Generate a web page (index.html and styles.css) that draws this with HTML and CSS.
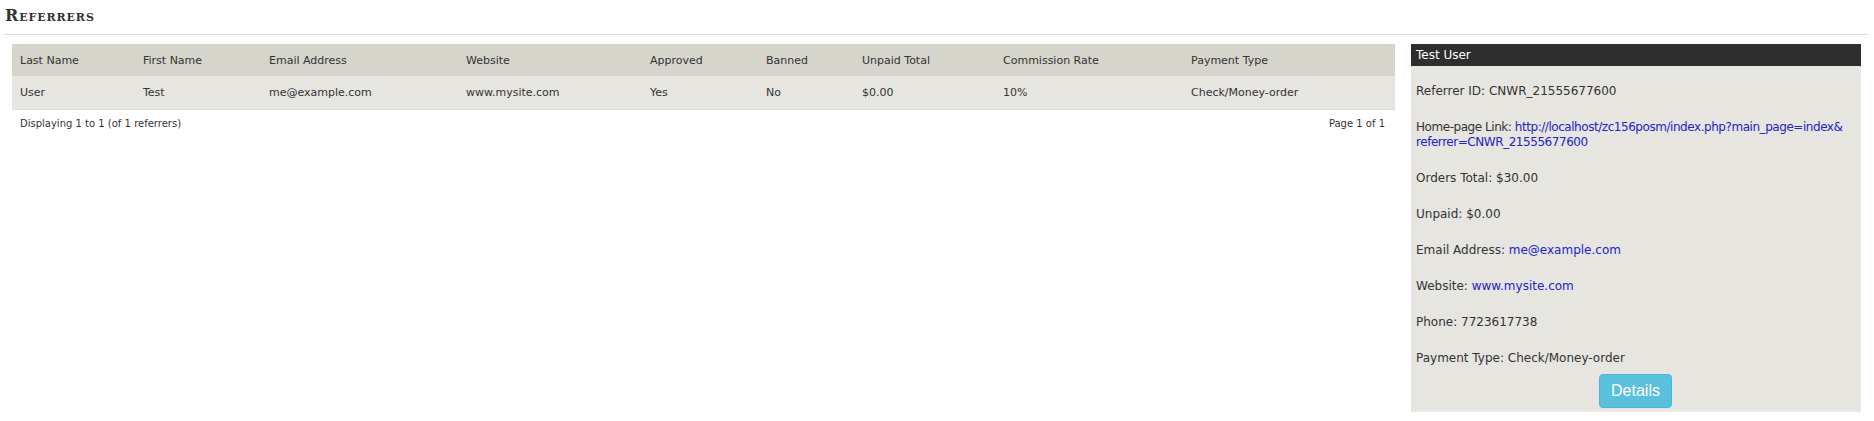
FILE: index.html
```html
<!DOCTYPE html>
<html lang="en">
<head>
<meta charset="utf-8">
<title>Referrers</title>
<link rel="stylesheet" href="styles.css">
</head>
<body>
<div class="page">
  <h1 class="page-title">Referrers</h1>
  <div class="rule"></div>
  <div class="content">
    <div class="listing">
      <table class="grid">
        <colgroup>
          <col class="c-last"><col class="c-first"><col class="c-email"><col class="c-web"><col class="c-appr"><col class="c-ban"><col class="c-unpaid"><col class="c-comm"><col class="c-pay">
        </colgroup>
        <thead>
          <tr class="head-row">
            <th>Last Name</th><th>First Name</th><th>Email Address</th><th>Website</th><th>Approved</th><th>Banned</th><th>Unpaid Total</th><th>Commission Rate</th><th>Payment Type</th>
          </tr>
        </thead>
        <tbody>
          <tr class="data-row">
            <td>User</td><td>Test</td><td>me@example.com</td><td>www.mysite.com</td><td>Yes</td><td>No</td><td>$0.00</td><td>10%</td><td>Check/Money-order</td>
          </tr>
        </tbody>
      </table>
      <div class="split">
        <span>Displaying <b class="n">1</b> to <b class="n">1</b> (of <b class="n">1</b> referrers)</span>
        <span>Page 1 of 1</span>
      </div>
    </div>
    <aside class="infobox">
      <div class="info-head">Test User</div>
      <div class="info-body">
        <p>Referrer ID: CNWR_21555677600</p>
        <p class="link-line">Home-page Link: <a href="#">http://localhost/zc156posm/index.php?main_page=index&amp;<br>referrer=CNWR_21555677600</a></p>
        <p>Orders Total: $30.00</p>
        <p>Unpaid: $0.00</p>
        <p>Email Address: <a href="#">me@example.com</a></p>
        <p>Website: <a href="#">www.mysite.com</a></p>
        <p>Phone: 7723617738</p>
        <p>Payment Type: Check/Money-order</p>
        <div class="actions"><button class="btn-info" type="button">Details</button></div>
      </div>
    </aside>
  </div>
</div>
</body>
</html>
```

FILE: styles.css
```css
html, body {
  margin: 0;
  padding: 0;
  background: #ffffff;
}

body {
  font-family: "DejaVu Sans", Verdana, sans-serif;
  color: #333333;
}

.page {
  padding: 0 6px 0 4px;
}

.page-title {
  margin: 0;
  padding: 6px 0 0 1px;
  height: 28px;
  box-sizing: border-box;
  font-family: "DejaVu Serif", Georgia, serif;
  font-size: 16px;
  line-height: 20px;
  font-weight: bold;
  font-variant: small-caps;
  letter-spacing: 0.9px;
  color: #333333;
}

.rule {
  margin-top: 6px;
  height: 1px;
  background: #dddddd;
}

.content {
  display: flex;
  align-items: flex-start;
  gap: 16px;
  margin-top: 9px;
  padding: 0 7px 0 8px;
}

.listing {
  flex: 1;
  min-width: 0;
}

.grid {
  width: 100%;
  border-collapse: collapse;
  table-layout: fixed;
  font-size: 11px;
}

.c-last { width: 123px; }
.c-first { width: 126px; }
.c-email { width: 197px; }
.c-web { width: 184px; }
.c-appr { width: 116px; }
.c-ban { width: 96px; }
.c-unpaid { width: 141px; }
.c-comm { width: 188px; }
.c-pay { width: 212px; }

.grid th,
.grid td {
  text-align: left;
  font-weight: normal;
  padding: 0 8px;
  white-space: nowrap;
  color: #333333;
}

.head-row {
  background: #d6d5cc;
  height: 32px;
}

.data-row {
  background: #e6e5e0;
  height: 33px;
  border-bottom: 1px solid #dedcd6;
}

.split {
  display: flex;
  justify-content: space-between;
  padding: 8px 10px 0 8px;
  font-size: 10px;
  line-height: 12px;
  color: #333333;
}

.split .n {
  font-weight: normal;
}

.infobox {
  width: 450px;
  flex: none;
}

.info-head {
  height: 22px;
  background: #2e2e2e;
  color: #ffffff;
  font-size: 12px;
  line-height: 22px;
  padding-left: 5px;
}

.info-body {
  background: #e6e5e0;
  padding: 18px 5px 3px 5px;
  display: flex;
  flex-direction: column;
  gap: 21px;
  font-size: 12px;
  line-height: 15px;
  border-right: 1px solid #eceae6;
  border-bottom: 1px solid #eceae6;
}

.info-body p {
  margin: 0;
}

.info-body .link-line {
  white-space: nowrap;
  letter-spacing: -0.45px;
}

.info-body a {
  color: #2323c8;
  text-decoration: none;
}

.actions {
  margin-top: -13px;
  display: flex;
  justify-content: center;
}

.btn-info {
  font-family: "Liberation Sans", Arial, sans-serif;
  font-size: 16px;
  line-height: 20px;
  color: #ffffff;
  background: #5bc0de;
  border: 1px solid #46b8da;
  border-radius: 4px;
  padding: 6px 11px;
  cursor: pointer;
}
```
